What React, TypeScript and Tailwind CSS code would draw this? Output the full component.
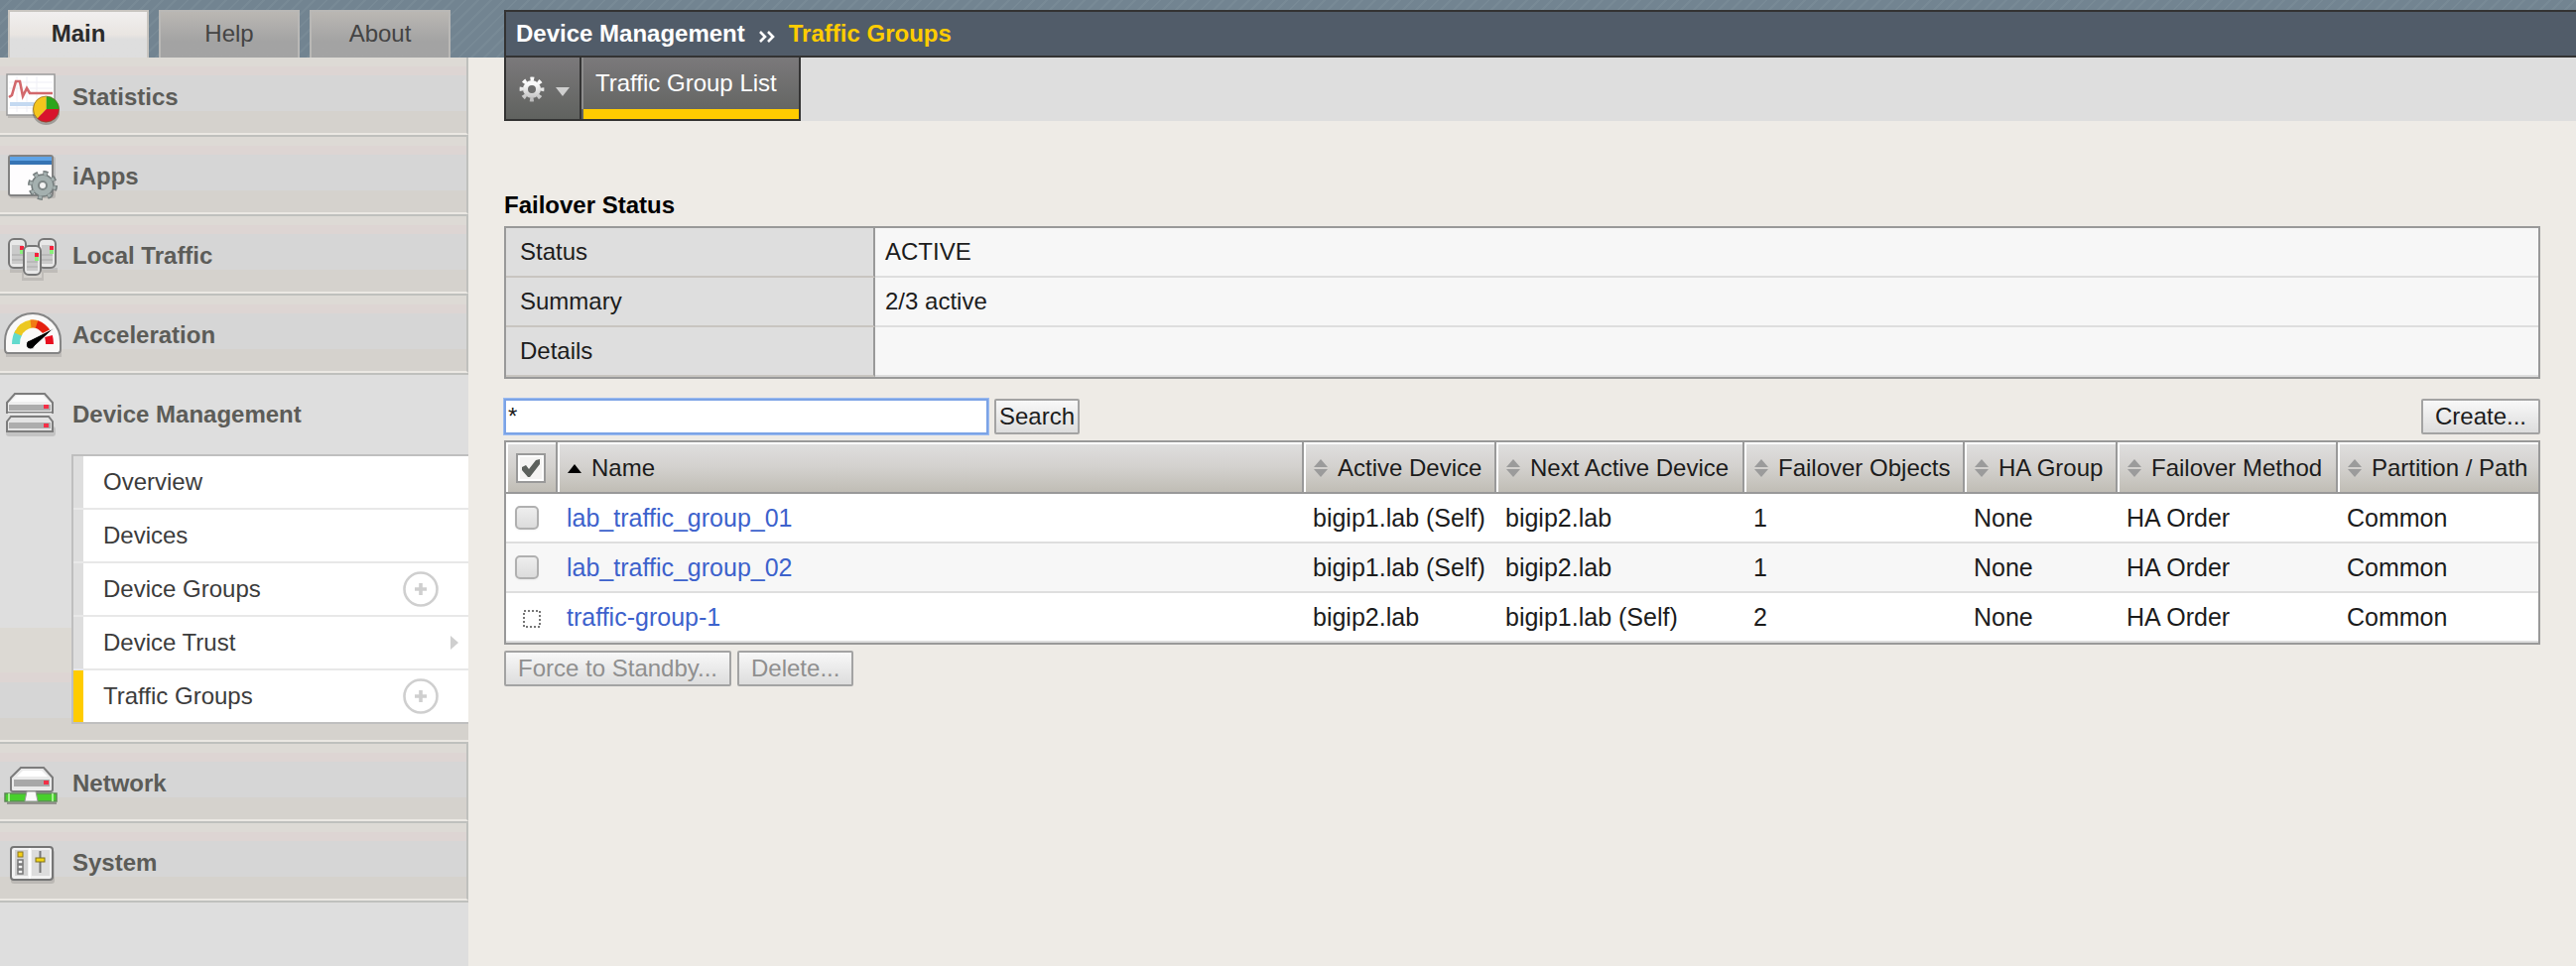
import { useState, type ReactNode } from "react";

const ROW_BG =
  "bg-[linear-gradient(to_bottom,#dddad5_0px,#dddad5_9px,#ddd5d3_9px,#ddd5d3_18px,#d6d6d6_18px,#d6d6d6_54px,#d5d2cd_54px)]";
const SECTION_BG =
  "bg-[linear-gradient(to_top,#d5d2cd_0px,#d5d2cd_22px,#d6d6d6_22px,#d6d6d6_58px,#ddd5d3_58px,#ddd5d3_68px,#dcd9d3_68px,#dcd9d3_113px,#dedede_113px)]";
const STRIPES =
  "bg-[repeating-linear-gradient(135deg,#728491_0px,#728491_7px,#788a96_7px,#788a96_9px)]";

function StatisticsIcon() {
  return (
    <svg viewBox="0 0 60 60" className="size-[60px]" aria-hidden="true">
      <rect x="8" y="9" width="48" height="42" fill="#000" opacity=".12" />
      <rect x="7" y="7" width="48" height="41" fill="#fff" stroke="#9a9a9a" strokeWidth="1.500" />
      <path d="M9 15h44M9 21h44M9 41h36M17 9v36M27 9v36M37 9v30" stroke="#efeff6" strokeWidth="1" />
      <path d="M10 35h26v4H10z" fill="#c4d9f1" />
      <path d="M9 30l3-2 4-14h4l3 15 4-8 3 5h23" fill="none" stroke="#d2686c" strokeWidth="2.600" />
      <circle cx="46.500" cy="44" r="14" fill="#000" opacity=".25" />
      <path d="M46.500 42V29a13 13 0 0 1 13 13z" fill="#2ba51c" />
      <path d="M46.500 42h13a13 13 0 0 1-22 9.500z" fill="#d8142d" />
      <path d="M46.500 42l-9 9.500a13 13 0 0 1 9-22.500z" fill="#f4c51d" />
      <circle cx="46.500" cy="42" r="13" fill="none" stroke="#7b5a2a" strokeWidth="1" opacity=".6" />
    </svg>
  );
}

function IAppsIcon() {
  return (
    <svg viewBox="0 0 60 60" className="size-[60px]" aria-hidden="true">
      <rect x="10" y="10" width="46" height="42" rx="2" fill="#000" opacity=".12" />
      <rect x="9" y="9" width="44" height="40" rx="2" fill="#fefdfe" stroke="#828282" strokeWidth="2" />
      <path d="M10 10h42v8H10z" fill="#5fa3e6" />
      <path d="M10 14h42v4H10z" fill="#3674b4" />
      <circle cx="43" cy="39" r="12" fill="none" stroke="#747c7c" strokeWidth="6" strokeDasharray="4.600 4.825" />
      <circle cx="43" cy="39" r="11" fill="#a4b0af" stroke="#747c7c" strokeWidth="1.500" />
      <circle cx="43" cy="39" r="12" fill="none" stroke="#a4b0af" strokeWidth="3" strokeDasharray="3.200 6.225" strokeDashoffset="-.7" />
      <circle cx="43" cy="39" r="4" fill="#f2f2f2" stroke="#7d8585" strokeWidth="2" />
    </svg>
  );
}

function Tower({ x, y, h }: { x: number; y: number; h: number }) {
  return (
    <g>
      <rect x={x} y={y} width="17" height={h} rx="5" fill="#e8e8e8" stroke="#777" strokeWidth="2" />
      <rect x={x + 3} y={y + 6} width="11" height={h - 10} fill="#cacaca" />
      <path d={`M${x + 3} ${y + 16}h11M${x + 3} ${y + 21}h11`} stroke="#b4b4b4" strokeWidth="1.500" />
      <rect x={x + 11} y={y + 7} width="4" height="4" fill="#f5223c" />
      <rect x={x + 11} y={y + 11} width="4" height="4" fill="#8bf07c" />
    </g>
  );
}

function LocalTrafficIcon() {
  return (
    <svg viewBox="0 0 60 60" className="size-[60px]" aria-hidden="true">
      <path d="M10 42h14v10h18V42h16v5H44v8H22v-8H10z" fill="#000" opacity=".1" />
      <Tower x={9} y={13} h={29} />
      <Tower x={39} y={13} h={29} />
      <Tower x={24} y={20} h={29} />
    </svg>
  );
}

function AccelerationIcon() {
  return (
    <svg viewBox="0 0 66 60" className="h-[60px] w-[66px]" aria-hidden="true">
      <path d="M6 52V34a28 26 0 0 1 56 0v18z" fill="#000" opacity=".1" />
      <path d="M8 48q-3 0-3-4v-8a28 28 0 0 1 56 0v8q0 4-3 4z" fill="#faf9f8" stroke="#858585" strokeWidth="2" />
      <path d="M16 39q0-7 3-12" fill="none" stroke="#62dacd" strokeWidth="8" />
      <path d="M18 29q4-9 14-10.500" fill="none" stroke="#ecc820" strokeWidth="8" />
      <path d="M31 18.500q4-.5 7 1" fill="none" stroke="#f27a14" strokeWidth="8" />
      <path d="M37 19q6 2 11 9" fill="none" stroke="#e5200e" strokeWidth="8" />
      <path d="M49 31q1 4 1 8" fill="none" stroke="#e80e1e" strokeWidth="8" />
      <path d="M55 22.500L30 35a4.500 4.500 0 1 0 5 6z" fill="#000" stroke="#fff" strokeWidth="1" />
    </svg>
  );
}

function DeviceManagementIcon() {
  return (
    <svg viewBox="0 0 60 60" className="size-[60px]" aria-hidden="true">
      <rect x="6" y="42" width="50" height="10" rx="3" fill="#000" opacity=".12" />
      <path d="M7 18l8-9h30l8 9v10H7z" fill="#efefef" stroke="#7c7c7c" strokeWidth="2" />
      <path d="M11 17l6-6h26l6 6z" fill="#fbfbfb" />
      <rect x="9" y="20" width="42" height="6" fill="#adadad" />
      <rect x="44" y="20" width="5" height="4" fill="#f53047" />
      <path d="M7 37l4-5h38l4 5v10H7z" fill="#e4e4e4" stroke="#7c7c7c" strokeWidth="2" />
      <rect x="9" y="38" width="42" height="6" fill="#adadad" />
      <rect x="44" y="39" width="5" height="4" fill="#f53047" />
      <path d="M8 29h44" stroke="#fff" strokeWidth="1" />
    </svg>
  );
}

function NetworkIcon() {
  return (
    <svg viewBox="0 0 60 60" className="size-[60px]" aria-hidden="true">
      <path d="M11 36V24l10-10h23l9 10v12q0 2-2 2H13q-2 0-2-2z" fill="#eaeaea" stroke="#7c7c7c" strokeWidth="2" />
      <path d="M17 23l6-6h19l6 6z" fill="#fff" />
      <rect x="14" y="26" width="36" height="7" fill="#a8a8a8" />
      <rect x="44" y="27" width="5" height="4" fill="#f22f47" />
      <rect x="5" y="40" width="52" height="8" fill="#48cf2d" stroke="#5e8757" strokeWidth="1.500" />
      <path d="M9 40v8M53 40v8" stroke="#a4f08d" strokeWidth="2" />
      <path d="M27 38h9l2 10H25z" fill="#fafafa" stroke="#999" strokeWidth="1" />
      <path d="M7 50h50" stroke="#000" opacity=".3" strokeWidth="2" />
    </svg>
  );
}

function SystemIcon() {
  return (
    <svg viewBox="0 0 60 60" className="size-[60px]" aria-hidden="true">
      <rect x="11" y="17" width="44" height="34" rx="3" fill="#000" opacity=".12" />
      <rect x="11" y="14" width="42" height="33" rx="3" fill="#f2f2f2" stroke="#757575" strokeWidth="2" />
      <rect x="15" y="17" width="13" height="26" fill="#d2d2d2" />
      <rect x="32" y="17" width="18" height="26" fill="#dcdcdc" />
      <path d="M30 15v31" stroke="#fff" strokeWidth="2" />
      <rect x="18" y="19" width="5" height="5" fill="#f5cf16" stroke="#8a7720" />
      {[27, 32, 37].map((y) => (
        <rect key={y} x="18" y={y} width="5" height="4" fill="#f4f4f4" stroke="#777" strokeWidth="1.500" />
      ))}
      <path d="M40.500 18v22" stroke="#777" strokeWidth="2" />
      <rect x="36" y="25" width="9" height="4" fill="#f1d414" stroke="#7c6f1e" />
    </svg>
  );
}

function PlusCircle() {
  return (
    <svg viewBox="0 0 36 36" className="size-9" aria-hidden="true">
      <circle cx="18" cy="18" r="16.500" fill="none" stroke="#cfcfcf" strokeWidth="2.600" />
      <path d="M18 12v12M12 18h12" stroke="#cfcfcf" strokeWidth="3.600" />
    </svg>
  );
}

function NavRow({ icon, label }: { icon: ReactNode; label: string }) {
  return (
    <li className="border-b-2 border-[#bfc0bd]">
      <a
        href="#"
        className={`flex h-[78px] items-center border-r-2 border-b-2 border-r-[#bfc0bd] border-b-[#ebe8e3] pt-1 font-bold text-[#5c5c58] ${ROW_BG}`}
      >
        <span className="w-[73px]">{icon}</span>
        <span>{label}</span>
      </a>
    </li>
  );
}

type SubItem = { label: string; add?: boolean; more?: boolean; active?: boolean };

const SUB_ITEMS: SubItem[] = [
  { label: "Overview" },
  { label: "Devices" },
  { label: "Device Groups", add: true },
  { label: "Device Trust", more: true },
  { label: "Traffic Groups", add: true, active: true },
];

function Sidebar() {
  return (
    <nav className="w-[472px] shrink-0 bg-[#dedede]" aria-label="Main">
      <ul>
        <NavRow icon={<StatisticsIcon />} label="Statistics" />
        <NavRow icon={<IAppsIcon />} label="iApps" />
        <NavRow icon={<LocalTrafficIcon />} label="Local Traffic" />
        <NavRow icon={<AccelerationIcon />} label="Acceleration" />
        <li className="border-b-2 border-[#bfc0bd]">
          <div className={`border-b-2 border-[#ebe8e3] pb-4 ${SECTION_BG}`}>
            <a href="#" className="flex h-20 items-center font-bold text-[#5c5c58]">
              <span className="w-[73px]">
                <DeviceManagementIcon />
              </span>
              <span>Device Management</span>
            </a>
            <ul className="ml-[72px] border-y-2 border-l-2 border-[#bfbfbf] text-[#3c3c3c]">
              {SUB_ITEMS.map((item) => (
                <li
                  key={item.label}
                  className={`flex border-b-2 border-[#e8e8e8] last:border-b-0 ${item.active ? "bg-[#ffcc00]" : "bg-[#dedede]"}`}
                >
                  <div className="ml-[10px] flex h-[52px] grow items-center bg-white pl-5">
                    <a href="#" className="grow">
                      {item.label}
                    </a>
                    {item.add && (
                      <button type="button" aria-label={`Add ${item.label}`} className="mr-[30px]">
                        <PlusCircle />
                      </button>
                    )}
                    {item.more && (
                      <svg viewBox="0 0 8 14" className="mr-[10px] h-[14px] w-2" aria-hidden="true">
                        <path d="M0 0l8 7-8 7z" fill="#cfcfcf" />
                      </svg>
                    )}
                  </div>
                </li>
              ))}
            </ul>
          </div>
        </li>
        <NavRow icon={<NetworkIcon />} label="Network" />
        <NavRow icon={<SystemIcon />} label="System" />
      </ul>
    </nav>
  );
}

function Tabs() {
  return (
    <div className="flex w-[508px] shrink-0 gap-[10px] pt-[10px] pl-2">
      <button
        type="button"
        className="h-12 w-[142px] border-2 border-b-0 border-[#c8c5c0] bg-linear-to-b from-[#f1efef] via-[#e9e5e1] to-[#dedede] to-60% pb-[2px] font-bold text-[#2b2b2b]"
      >
        Main
      </button>
      {["Help", "About"].map((t) => (
        <button
          key={t}
          type="button"
          className="h-12 w-[142px] border-2 border-b-0 border-[#b9b8b6] bg-linear-to-b from-[#bab7b3] to-[#a3a3a3] to-65% pb-[2px] text-[#444]"
        >
          {t}
        </button>
      ))}
    </div>
  );
}

function SortIcon() {
  return (
    <svg viewBox="0 0 14 20" className="h-5 w-[14px] shrink-0" aria-hidden="true">
      <path d="M7 1l7 8H0zM0 11h14l-7 8z" fill="#9b9b9b" />
    </svg>
  );
}

const COLUMNS = [
  { label: "Active Device", width: "w-[194px]" },
  { label: "Next Active Device", width: "w-[250px]" },
  { label: "Failover Objects", width: "w-[222px]" },
  { label: "HA Group", width: "w-[154px]" },
  { label: "Failover Method", width: "w-[222px]" },
  { label: "Partition / Path", width: "w-[202px]" },
];

const ROWS = [
  { name: "lab_traffic_group_01", selectable: true, cells: ["bigip1.lab (Self)", "bigip2.lab", "1", "None", "HA Order", "Common"] },
  { name: "lab_traffic_group_02", selectable: true, cells: ["bigip1.lab (Self)", "bigip2.lab", "1", "None", "HA Order", "Common"] },
  { name: "traffic-group-1", selectable: false, cells: ["bigip2.lab", "bigip1.lab (Self)", "2", "None", "HA Order", "Common"] },
];

const HEAD =
  "border-r-2 border-b-2 border-[#999] p-0 font-normal last:border-r-0 bg-linear-to-b from-[#e0dfdf] via-[#d3d1ce] to-[#c0bdb5]";
const HEAD_INNER =
  "flex h-[50px] items-center gap-[10px] border-t-2 border-l-2 border-white pl-2 whitespace-nowrap";
const CELL = "border-b-2 border-[#dedede] p-0 pl-[9px] whitespace-nowrap";
const BUTTON =
  "h-9 rounded-[2px] border-2 border-[#a3a3a3] bg-linear-to-b from-[#f8f8f8] to-[#dddddd]";

function TrafficGroupTable() {
  const [all, setAll] = useState(true);
  return (
    <table className="w-full table-fixed border-separate border-spacing-0 border-2 border-[#999] text-left">
      <thead>
        <tr>
          <th className={`w-[52px] ${HEAD}`}>
            <div className={HEAD_INNER}>
              <label className="relative flex size-[30px] items-center justify-center border-2 border-[#999] bg-[#f4f3f2] inset-ring-2 inset-ring-white">
                <input
                  type="checkbox"
                  aria-label="Select all"
                  checked={all}
                  onChange={(e) => setAll(e.target.checked)}
                  className="absolute inset-0 appearance-none"
                />
                {all && (
                  <svg viewBox="0 0 20 20" className="size-5" aria-hidden="true">
                    <path d="M1 9l4-2 3 4L15 2l4-1v5L9 19H7L1 12z" fill="#5c605c" />
                  </svg>
                )}
              </label>
            </div>
          </th>
          <th className={HEAD}>
            <div className={HEAD_INNER}>
              <svg viewBox="0 0 14 9" className="h-[9px] w-[14px]" aria-hidden="true">
                <path d="M7 0l7 9H0z" fill="#000" />
              </svg>
              <span>Name</span>
            </div>
          </th>
          {COLUMNS.map((c) => (
            <th key={c.label} className={`${c.width} ${HEAD}`}>
              <div className={HEAD_INNER}>
                <SortIcon />
                <span>{c.label}</span>
              </div>
            </th>
          ))}
        </tr>
      </thead>
      <tbody className="text-[25px]">
        {ROWS.map((r) => (
          <tr key={r.name} className="h-[50px] bg-white even:bg-[#f7f7f7]">
            <td className={CELL}>
              {r.selectable ? (
                <input
                  type="checkbox"
                  aria-label={`Select ${r.name}`}
                  className="block size-6 appearance-none rounded-[5px] border-2 border-[#b0b0b0] bg-linear-to-b from-[#eeeeee] to-[#dcdcdc] shadow-xs checked:bg-[#999]"
                />
              ) : (
                <svg viewBox="0 0 18 18" className="mt-1 ml-2 size-[18px]" aria-hidden="true">
                  <rect x="1" y="1" width="16" height="16" fill="none" stroke="#777" strokeWidth="2" strokeDasharray="2 2" />
                </svg>
              )}
            </td>
            <td className={CELL}>
              <a href="#" className="text-[#3d62cc]">
                {r.name}
              </a>
            </td>
            {r.cells.map((c, i) => (
              <td key={COLUMNS[i].label} className={CELL}>
                {c}
              </td>
            ))}
          </tr>
        ))}
      </tbody>
    </table>
  );
}

function GearIcon() {
  return (
    <svg viewBox="0 0 26 26" className="size-[26px]" aria-hidden="true">
      <defs>
        <linearGradient id="gear" gradientUnits="userSpaceOnUse" x1="0" y1="0" x2="0" y2="26">
          <stop offset="0.3" stopColor="#fafafa" />
          <stop offset="1" stopColor="#b4b4b4" />
        </linearGradient>
      </defs>
      <circle cx="13" cy="13" r="6.500" fill="none" stroke="url(#gear)" strokeWidth="5" />
      <circle cx="13" cy="13" r="10.400" fill="none" stroke="url(#gear)" strokeWidth="4" strokeDasharray="3.800 4.368" strokeDashoffset="1.900" />
    </svg>
  );
}

const STATUS = [
  ["Status", "ACTIVE"],
  ["Summary", "2/3 active"],
  ["Details", ""],
];

export default function App() {
  return (
    <div className="flex min-h-screen flex-col bg-[#eeebe6] font-['Liberation_Sans',Arial,sans-serif] text-[24px] leading-7 text-[#1c1c1c]">
      <header className={`flex h-[58px] ${STRIPES}`}>
        <Tabs />
        <div className="mt-[10px] flex grow items-center gap-[14px] border-y-2 border-l-2 border-[#333] bg-[#515c69] pl-[10px] font-bold text-white">
          <span>Device Management</span>
          <svg viewBox="0 0 16 12" className="mt-[6px] h-3 w-4" aria-hidden="true">
            <path d="M1 1l5 5-5 5M9 1l5 5-5 5" fill="none" stroke="#fff" strokeWidth="2.600" />
          </svg>
          <span className="text-[#ffcc00]">Traffic Groups</span>
        </div>
      </header>
      <div className="flex grow">
        <Sidebar />
        <main className="grow pl-9">
          <div className="flex h-16 bg-[#dedede]">
            <button
              type="button"
              aria-label="Options"
              className="flex w-[78px] items-center gap-[11px] border-x-2 border-b-2 border-[#333] bg-linear-to-b from-[#7b797b] to-[#60625f] pt-[2px] pl-[13px]"
            >
              <GearIcon />
              <svg viewBox="0 0 14 9" className="mt-1 h-[9px] w-[14px]" aria-hidden="true">
                <path d="M0 0h14L7 9z" fill="#cfcfcf" />
              </svg>
            </button>
            <a
              href="#"
              className="flex flex-col border-r-2 border-b-2 border-[#333] bg-linear-to-b from-[#7b797b] to-[#60625f] text-white"
            >
              <span className="flex grow items-center border-l-2 border-[#8d8d8d] pr-[22px] pl-3">Traffic Group List</span>
              <span className="ml-[2px] h-[10px] bg-[#ffcc00]" />
            </a>
          </div>
          <div className="pt-[71px] pr-9">
            <h1 className="mb-[7px] font-bold text-black">Failover Status</h1>
            <table className="w-full border-separate border-spacing-0 border-2 border-[#999] text-left">
              <tbody>
                {STATUS.map(([k, v]) => (
                  <tr key={k} className="h-[50px]">
                    <th className="w-[372px] border-r-2 border-b-2 border-r-[#999] border-b-[#c8c5c0] bg-[#dedede] p-0 pl-[14px] font-normal">
                      {k}
                    </th>
                    <td className="border-b-2 border-[#dedede] bg-[#f7f7f7] p-0 pl-[10px]">{v}</td>
                  </tr>
                ))}
              </tbody>
            </table>
            <div className="mt-5 mb-[6px] flex items-center">
              <input
                type="text"
                aria-label="Search traffic groups"
                defaultValue="*"
                className="h-9 w-[488px] border-2 border-[#7ba3e6] bg-white px-[2px] text-[24px] ring-1 ring-[#9dbcf0] outline-none"
              />
              <button type="button" className={`ml-[6px] px-[3px] ${BUTTON}`}>
                Search
              </button>
              <button type="button" className={`ml-auto px-3 ${BUTTON}`}>
                Create...
              </button>
            </div>
            <TrafficGroupTable />
            <div className="mt-[6px] flex gap-[6px] text-[#8f8f8f]">
              <button type="button" disabled className={`px-3 ${BUTTON}`}>
                Force to Standby...
              </button>
              <button type="button" disabled className={`px-3 ${BUTTON}`}>
                Delete...
              </button>
            </div>
          </div>
        </main>
      </div>
    </div>
  );
}
